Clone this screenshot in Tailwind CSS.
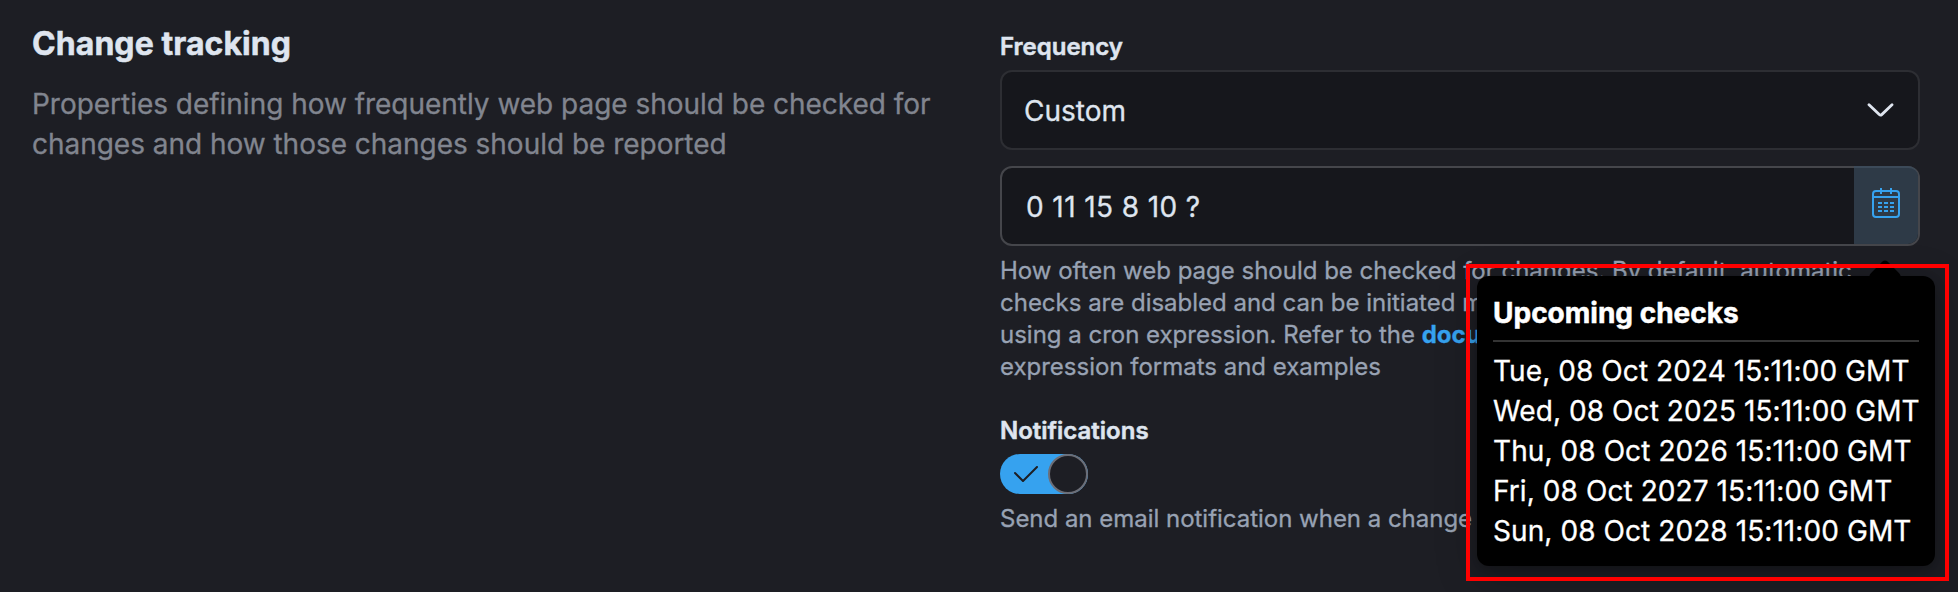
<!DOCTYPE html>
<html lang="en">
<head>
<meta charset="utf-8">
<title>Change tracking</title>
<script src="https://cdn.jsdelivr.net/npm/@tailwindcss/browser@4"></script>
</head>
<body class="bg-[#1d1e24]">
<main class="relative grid h-[592px] w-[1958px] grid-cols-[968px_920px] overflow-hidden bg-[#1d1e24] pl-8 font-['Inter',sans-serif] text-[28px] leading-10 text-[#dfe5ef] [-webkit-text-stroke:0.3px]">
  <section class="pt-6">
    <h2 class="text-[32px] leading-10 font-bold tracking-[0.07px] [-webkit-text-stroke:0.5px]">Change tracking</h2>
    <p class="mt-5 w-[920px] tracking-[-0.025px] text-[#81858f]">Properties defining how frequently web page should be checked for<br>changes and how those changes should be reported</p>
  </section>

  <section class="flex flex-col pt-[29px]">
    <label class="text-2xl leading-9 font-semibold [-webkit-text-stroke:0.5px]">Frequency</label>
    <div class="mt-[5px] flex h-20 items-center justify-between rounded-xl border-2 border-[#2d2e33] bg-[#16171c] pr-[24px] pl-[22px]">
      <span class="pt-0.5">Custom</span>
      <svg class="h-[14px] w-[27px]" viewBox="0 0 27 14" fill="none" stroke="#dfe5ef" stroke-width="2.8" stroke-linecap="round" stroke-linejoin="round"><path d="M2 1.8 12.3 11.6Q13.5 12.7 14.7 11.6L25 1.8"/></svg>
    </div>
    <div class="mt-4 flex h-20 items-start justify-between rounded-xl border-2 border-[#45464b] bg-[#16171c] pl-[24px]">
      <span class="pt-[19px] tracking-[0.4px]">0 11 15 8 10 ?</span>
      <div class="-mt-0.5 flex h-[78px] w-16 items-start justify-center rounded-r-[10px] border-t-2 border-[#3c4a59] bg-[#2e3a47] pt-[20px]">
        <svg class="h-[30px] w-7" viewBox="0 0 28 30" fill="none" stroke="#36a2ef" stroke-width="2"><rect x="1" y="3" width="26" height="26" rx="3"/><path d="M1 9h26M9 0v6M19 0v6M6 15h4M12 15h4M18 15h4M6 19h4M12 19h4M18 19h4M6 23h4M12 23h4M18 23h4"/></svg>
      </div>
    </div>
    <p class="mt-[9px] text-2xl leading-8 tracking-[-0.01px] whitespace-nowrap text-[#98a2b3]">How often web page should be checked for changes. By default, automatic<br>checks are disabled and can be initiated manually. Custom schedules<br>using a cron expression. Refer to the <a class="font-bold text-[#36a2ef]">documentation</a> for<br>expression formats and examples</p>
    <label class="mt-[30px] text-2xl leading-9 font-semibold [-webkit-text-stroke:0.5px]">Notifications</label>
    <div class="mt-[5px] flex h-10 w-[88px] items-center justify-between rounded-full bg-[#36a2ef]">
      <svg class="ml-[14px] h-4 w-6" viewBox="0 0 24 16" fill="none" stroke="#1d1e24" stroke-width="2" stroke-linecap="round" stroke-linejoin="round"><path d="M1 7 9 15 23 1"/></svg>
      <span class="size-10 rounded-full border-2 border-[#6c6e77] bg-[#1d1e24]"></span>
    </div>
    <p class="mt-[9px] text-2xl leading-8 tracking-[-0.02px] text-[#98a2b3]">Send an email notification when a change</p>
  </section>

  <aside class="absolute top-[276px] left-[1477px] h-[290px] w-[458px] rounded-xl bg-black p-4 pt-[17px] whitespace-nowrap text-white shadow-[0_10px_40px_rgba(0,0,0,0.25),0_4px_12px_rgba(0,0,0,0.2)]">
    <span class="absolute -top-[12px] left-[396px] size-6 rotate-45 rounded-[4px] bg-black"></span>
    <h3 class="relative border-b-2 border-[#343434] pb-[7px] font-bold [-webkit-text-stroke:0.5px]">Upcoming checks</h3>
    <ul class="mt-[9px] tracking-[0.08px]">
      <li>Tue, 08 Oct 2024 15:11:00 GMT</li>
      <li>Wed, 08 Oct 2025 15:11:00 GMT</li>
      <li>Thu, 08 Oct 2026 15:11:00 GMT</li>
      <li>Fri, 08 Oct 2027 15:11:00 GMT</li>
      <li>Sun, 08 Oct 2028 15:11:00 GMT</li>
    </ul>
  </aside>
  <div class="absolute top-[264px] left-[1466px] h-[317px] w-[483px] border-4 border-[#ff0000]"></div>
</main>
</body>
</html>
